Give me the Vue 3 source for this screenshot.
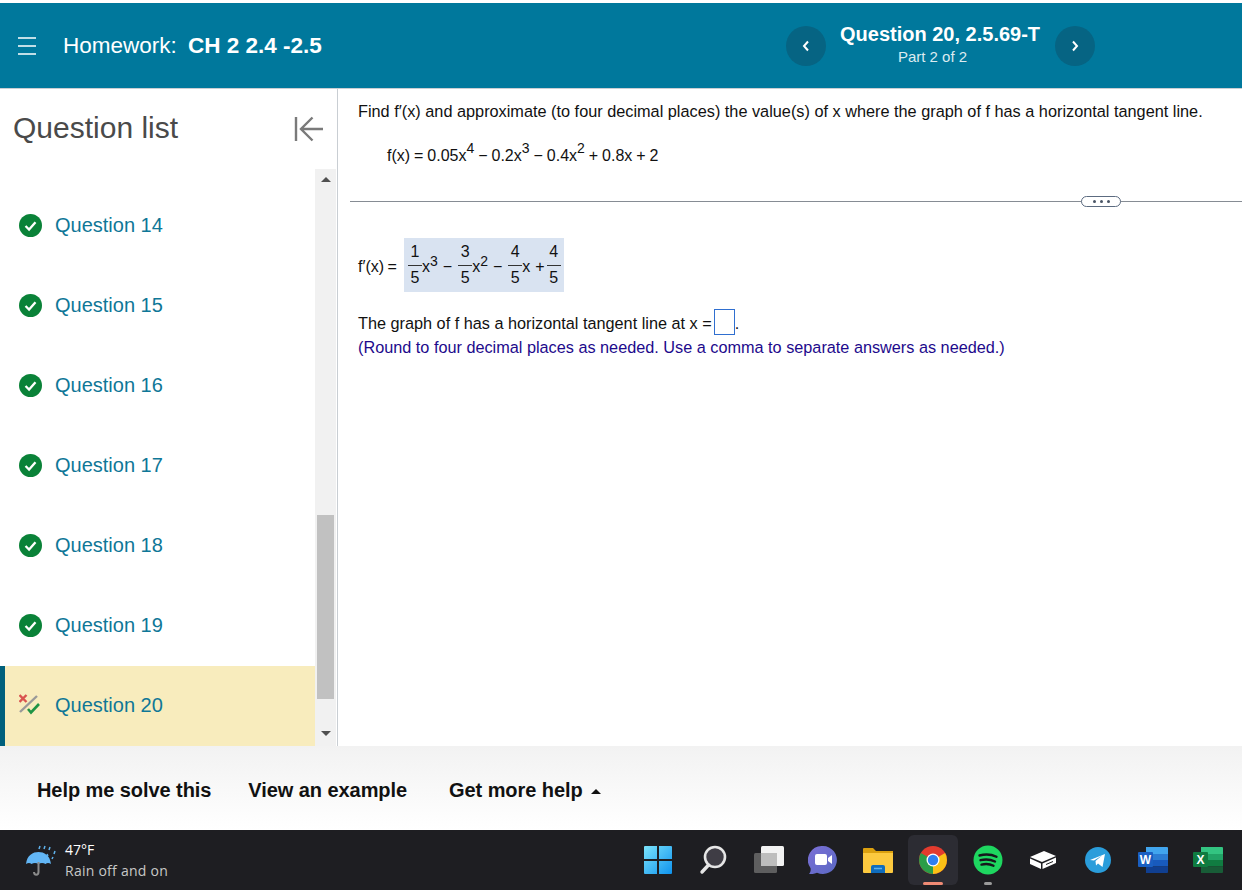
<script setup>
const questions = [14, 15, 16, 17, 18, 19]
const helpLinks = ["Help me solve this", "View an example"]
const fractions = [
  { num: 1, tail: "x", sup: 3, op: "−" },
  { num: 3, tail: "x", sup: 2, op: "−" },
  { num: 4, tail: "x", sup: null, op: "+" },
  { num: 4, tail: "", sup: null, op: "" },
]
</script>

<template>
  <div class="page">
    <header class="topbar">
      <svg class="menu-icon" width="20" height="18" viewBox="0 0 20 18">
        <path d="M1 1h18M1 9h18M1 17h18" stroke="#fff" stroke-width="1.700" fill="none" />
      </svg>
      <div class="hw-title">Homework: <b>CH 2 2.4 -2.5</b></div>
      <nav class="q-nav">
        <button class="nav-btn">
          <svg width="8" height="12" viewBox="0 0 8 12">
            <path d="M6 1.500 2 6l4 4.500" stroke="#fff" stroke-width="2" fill="none" />
          </svg>
        </button>
        <div class="q-label">
          <div class="q-name">Question 20, 2.5.69-T</div>
          <div class="q-part">Part 2 of 2</div>
        </div>
        <button class="nav-btn">
          <svg width="8" height="12" viewBox="0 0 8 12">
            <path d="M2 1.500 6 6l-4 4.500" stroke="#fff" stroke-width="2" fill="none" />
          </svg>
        </button>
      </nav>
    </header>

    <div class="middle">
      <aside class="sidebar">
        <div class="side-head">
          <h2>Question list</h2>
          <svg width="30" height="26" viewBox="0 0 30 26">
            <path d="M2 1v24M29 13H7M18.500 1.500 7 13l11.500 11.500" stroke="#7a7a7a" stroke-width="2.400" fill="none" />
          </svg>
        </div>
        <div class="side-body">
          <ul class="q-list">
            <li v-for="n in questions" :key="n" class="q-item">
              <svg class="status" width="23" height="23" viewBox="0 0 24 24">
                <circle cx="12" cy="12" r="12" fill="#0a8238" />
                <path d="M6.800 12.500 10.500 16.200 17.200 8.500" stroke="#fff" stroke-width="2.400" fill="none" />
              </svg>
              <span>Question {{ n }}</span>
            </li>
            <li class="q-item current">
              <svg class="status" width="24" height="24" viewBox="0 0 24 24">
                <path d="M1 19 18 3" stroke="#999" stroke-width="2.400" />
                <path d="M.5 2 7.500 9M7.500 2 .5 9" stroke="#d9534f" stroke-width="2.400" />
                <path d="M9 16 12 19.500 20 11" stroke="#1f9445" stroke-width="2.600" fill="none" />
              </svg>
              <span>Question 20</span>
            </li>
          </ul>
          <div class="scrollbar">
            <span class="arrow up"></span>
            <span class="thumb"></span>
            <span class="arrow down"></span>
          </div>
        </div>
      </aside>

      <main class="content">
        <div class="prompt">
          <p class="lead">Find f′(x) and approximate (to four decimal places) the value(s) of x where the graph of f has a horizontal tangent line.</p>
          <p class="given">f(x) = 0.05x<sup>4</sup> − 0.2x<sup>3</sup> − 0.4x<sup>2</sup> + 0.8x + 2</p>
        </div>
        <div class="divider">
          <span class="more"><i></i><i></i><i></i></span>
        </div>
        <div class="answer">
          <div class="deriv">
            <span class="deriv-label">f′(x) =</span>
            <span class="answer-box">
              <template v-for="(f, i) in fractions" :key="i">
                <span class="frac"><span class="top">{{ f.num }}</span><span class="bottom">5</span></span>
                <span v-if="f.tail" class="term">{{ f.tail }}<sup v-if="f.sup">{{ f.sup }}</sup></span>
                <span v-if="f.op" class="op" :class="{ plus: f.op === '+' }">{{ f.op }}</span>
              </template>
            </span>
          </div>
          <p class="line">The graph of f has a horizontal tangent line at x =<span class="blank"></span>.</p>
          <p class="hint">(Round to four decimal places as needed. Use a comma to separate answers as needed.)</p>
        </div>
      </main>
    </div>

    <footer class="help-bar">
      <a v-for="link in helpLinks" :key="link" class="help-link">{{ link }}</a>
      <a class="help-link more-help">Get more help<span class="caret"></span></a>
    </footer>

    <div class="taskbar">
      <div class="weather">
        <svg width="34" height="34" viewBox="0 0 34 34">
          <path d="M15 6l1-3M20 6l1-3M26 4l-1 3M31 8l-1 3M23 11l1 2M29 14l-1 2" stroke="#5fb2ec" stroke-width="1.500" />
          <path d="M2 21C3 12 9 9 14.500 9S26 12 27 21c-2-1.500-4-1.500-5.500 0-2-1.500-5-1.500-7 0-2-1.500-5-1.500-7 0C6 19.500 4 19.500 2 21Z" fill="#62b6f5" />
          <path d="M14.500 19v10c0 3.500-4.500 3.500-4.500 0" stroke="#8b8b8b" stroke-width="2" fill="none" />
        </svg>
        <div class="weather-text">
          <div class="temp">47°F</div>
          <div class="cond">Rain off and on</div>
        </div>
      </div>
      <div class="tray">
        <div class="slot">
          <svg width="30" height="30" viewBox="0 0 30 30">
            <defs>
              <linearGradient id="win" x1="0" y1="0" x2="1" y2="1">
                <stop offset="0" stop-color="#7be3fb" />
                <stop offset="1" stop-color="#0f93ee" />
              </linearGradient>
            </defs>
            <path d="M1 2a1 1 0 0 1 1-1h12v13H1ZM16 1h12a1 1 0 0 1 1 1v12H16ZM1 16h13v13H2a1 1 0 0 1-1-1ZM16 16h13v12a1 1 0 0 1-1 1H16Z" fill="url(#win)" />
          </svg>
        </div>
        <div class="slot">
          <svg width="28" height="30" viewBox="0 0 28 30">
            <circle cx="16" cy="12" r="10" fill="#3f3d45" stroke="#e6e6e6" stroke-width="2.600" />
            <path d="M9.500 20 3 27" stroke="#e6e6e6" stroke-width="3.400" stroke-linecap="round" />
          </svg>
        </div>
        <div class="slot">
          <svg width="32" height="30" viewBox="0 0 32 30">
            <rect x="9" y="1" width="23" height="20" rx="1.500" fill="#f2f2f2" />
            <rect x="2" y="8" width="23" height="20" rx="1.500" fill="#6a6a6a" fill-opacity="0.850" />
            <rect x="9" y="8" width="16" height="13" fill="#bdbdbd" />
          </svg>
        </div>
        <div class="slot">
          <svg width="30" height="30" viewBox="0 0 30 30">
            <defs>
              <linearGradient id="teams" x1="0" y1="0" x2="1" y2="1">
                <stop offset="0" stop-color="#7b6fd6" />
                <stop offset="1" stop-color="#5b69c4" />
              </linearGradient>
            </defs>
            <path d="M15 1a14 14 0 1 1-6 26.700C6 29 3 29 1 29c1.500-1.500 2-4 1.500-6A14 14 0 0 1 15 1Z" fill="url(#teams)" />
            <rect x="7" y="9" width="12" height="11" rx="2" fill="#fff" />
            <path d="M20 13l4-3v9l-4-3Z" fill="#fff" />
          </svg>
        </div>
        <div class="slot">
          <svg width="32" height="30" viewBox="0 0 32 30">
            <path d="M1 4a1 1 0 0 1 1-1h9l3 3h17v6H1Z" fill="#dba00f" />
            <path d="M1 8h30v19a1 1 0 0 1-1 1H2a1 1 0 0 1-1-1Z" fill="#fcc93f" />
            <path d="M9 22a2 2 0 0 1 2-2h10a2 2 0 0 1 2 2v6H9Z" fill="#0f6cbd" />
            <path d="M12 23.500h8" stroke="#5fb2ec" stroke-width="1.500" />
          </svg>
        </div>
        <div class="slot chrome-slot">
          <svg width="28" height="28" viewBox="0 0 28 28">
            <circle cx="14" cy="14" r="14" fill="#e33b2e" />
            <path d="M14 14 26.100 7A14 14 0 0 1 14 28Z" fill="#fbc116" />
            <path d="M14 14 14 28A14 14 0 0 1 1.900 7Z" fill="#2a9d47" />
            <circle cx="14" cy="14" r="6.500" fill="#fff" />
            <circle cx="14" cy="14" r="5.200" fill="#2f7ff0" />
          </svg>
          <span class="open-bar salmon"></span>
        </div>
        <div class="slot">
          <svg width="30" height="30" viewBox="0 0 30 30">
            <circle cx="15" cy="15" r="14.500" fill="#1ed760" />
            <path d="M6.500 10.500c6-1.700 12-1.200 17 1.300M7.500 15.200c5-1.300 10-.9 14.500 1.300M8.500 19.600c4-1 8.500-.7 12 1.200" stroke="#16181c" stroke-width="2.400" stroke-linecap="round" fill="none" />
          </svg>
          <span class="open-bar grey"></span>
        </div>
        <div class="slot">
          <svg width="28" height="20" viewBox="0 0 28 20">
            <path d="M1 7 15 1l12 5-14 6Z" fill="#fff" />
            <path d="M1 8.500 12 13.500v5.500L1 14ZM13.500 13.500 27 7.500V13L13.500 19Z" fill="#fff" />
            <path d="M17 14.500 24 11.500" stroke="#16181c" stroke-width="1" />
          </svg>
        </div>
        <div class="slot">
          <svg width="26" height="26" viewBox="0 0 26 26">
            <circle cx="13" cy="13" r="13" fill="#2a9ddb" />
            <path d="M5 13 20 7l-2.500 13-4.500-3.500-2 2-.5-4.500 6.500-5.500-8 5Z" fill="#fff" />
          </svg>
        </div>
        <div class="slot">
          <svg width="30" height="26" viewBox="0 0 30 26">
            <path d="M8 0h21a1 1 0 0 1 1 1v6H8Z" fill="#41a5ee" />
            <rect x="8" y="7" width="22" height="6" fill="#2b7cd3" />
            <rect x="8" y="13" width="22" height="6.500" fill="#185abd" />
            <path d="M8 19.500h22V25a1 1 0 0 1-1 1H8Z" fill="#103f91" />
            <rect x="0" y="5" width="15" height="15" rx="1" fill="#1a5fc2" />
            <text x="7.500" y="16.500" class="badge-letter">W</text>
          </svg>
        </div>
        <div class="slot">
          <svg width="30" height="26" viewBox="0 0 30 26">
            <path d="M8 0h21a1 1 0 0 1 1 1v6H8Z" fill="#33c481" />
            <rect x="8" y="7" width="22" height="6" fill="#21a366" />
            <rect x="8" y="13" width="22" height="6.500" fill="#107c41" />
            <path d="M8 19.500h22V25a1 1 0 0 1-1 1H8Z" fill="#185c37" />
            <rect x="0" y="5" width="15" height="15" rx="1" fill="#0f7b40" />
            <text x="7.500" y="16.500" class="badge-letter">X</text>
          </svg>
        </div>
      </div>
    </div>
  </div>
</template>

<style scoped>
.page {
  display: flex;
  flex-direction: column;
  height: 890px;
  padding-top: 3px;
  box-sizing: border-box;
  overflow: hidden;
  background: #fff;
  font-family: "Liberation Sans", Arial, sans-serif;
  color: #111;
}

.topbar {
  display: flex;
  align-items: center;
  height: 86px;
  flex-shrink: 0;
  padding: 0 147px 0 17px;
  box-sizing: border-box;
  background: #00789c;
  border-bottom: 1px solid #c9ced3;
  color: #fff;
}

.hw-title {
  margin-left: 26px;
  margin-top: 1px;
  font-size: 22.500px;
  white-space: pre;
}

.hw-title b {
  margin-left: 5px;
}

.q-nav {
  display: flex;
  align-items: center;
  margin-left: auto;
  margin-top: 1px;
}

.nav-btn {
  display: flex;
  align-items: center;
  justify-content: center;
  width: 40px;
  height: 40px;
  padding: 0;
  border: 0;
  border-radius: 50%;
  background: #066483;
}

.q-label {
  width: 200px;
  margin: -5px 15px 0 14px;
  text-align: center;
}

.q-name {
  font-size: 20px;
  font-weight: 700;
  line-height: 26px;
  white-space: nowrap;
}

.q-part {
  margin-right: 15px;
  font-size: 15px;
  line-height: 19px;
  color: #dcebf0;
}

.middle {
  display: flex;
  flex: 1;
  min-height: 0;
}

.sidebar {
  display: flex;
  flex-direction: column;
  width: 338px;
  flex-shrink: 0;
  box-sizing: border-box;
  border-right: 1px solid #c9ced3;
}

.side-head {
  display: flex;
  align-items: center;
  justify-content: space-between;
  height: 80px;
  padding: 0 13px;
  box-sizing: border-box;
  flex-shrink: 0;
}

.side-head h2 {
  margin: -2px 0 0;
  font-size: 30px;
  font-weight: 400;
  color: #4a4a4a;
}

.side-body {
  display: flex;
  flex: 1;
  min-height: 0;
}

.q-list {
  flex: 1;
  margin: 0;
  padding: 16px 0 0;
  list-style: none;
}

.q-item {
  display: flex;
  align-items: center;
  height: 80px;
  padding-left: 19px;
  font-size: 20px;
  color: #0f7797;
}

.q-item .status {
  margin-right: 13px;
}

.q-item.current {
  box-sizing: border-box;
  margin-top: 1px;
  padding-left: 14px;
  padding-bottom: 2px;
  border-left: 5px solid #00607c;
  background: #f8ecbd;
}

.q-item.current .status {
  margin-right: 12px;
}

.scrollbar {
  display: flex;
  flex-direction: column;
  align-items: center;
  width: 21px;
  margin-right: 1px;
  background: #f1f1f1;
}

.arrow {
  width: 0;
  height: 0;
  border-left: 5px solid transparent;
  border-right: 5px solid transparent;
}

.arrow.up {
  margin-top: 8px;
  border-bottom: 5px solid #505050;
}

.arrow.down {
  margin-top: 32px;
  border-top: 5px solid #505050;
}

.thumb {
  width: 17px;
  height: 184px;
  margin-top: 333px;
  background: #c1c1c1;
}

.content {
  flex: 1;
  min-width: 0;
  padding-left: 12px;
  font-size: 16.250px;
}

.content p {
  margin: 0;
}

.prompt {
  padding: 13px 0 0 8px;
  height: 112px;
  box-sizing: border-box;
}

.lead {
  font-size: 16.300px;
  line-height: 18px;
  white-space: nowrap;
}

.given {
  margin-top: 25px !important;
  padding-left: 29px;
  font-size: 16px;
  line-height: 22px;
  word-spacing: -0.500px;
  white-space: pre;
}

sup {
  font-size: 14px;
  line-height: 0;
  vertical-align: 8px;
}

.divider {
  position: relative;
  height: 1px;
  background: #868c94;
}

.more {
  position: absolute;
  left: 731px;
  top: -5px;
  display: flex;
  align-items: center;
  justify-content: center;
  gap: 4px;
  width: 40px;
  height: 11px;
  box-sizing: border-box;
  border: 1px solid #5c6b80;
  border-radius: 6px;
  background: #fff;
}

.more i {
  width: 3px;
  height: 3px;
  border-radius: 50%;
  background: #4a5566;
}

.answer {
  padding: 36px 0 0 8px;
}

.deriv {
  display: flex;
  align-items: center;
  height: 54px;
  font-size: 16px;
}

.deriv-label {
  width: 46px;
  margin-top: 3px;
  flex-shrink: 0;
  word-spacing: -1px;
}

.answer-box {
  display: flex;
  align-items: center;
  width: 160px;
  height: 54px;
  padding: 0 0 0 4px;
  box-sizing: border-box;
  background: #d9e3f1;
}

.frac {
  display: inline-flex;
  flex-direction: column;
  align-items: center;
  width: 14px;
  line-height: 18px;
}

.frac .top {
  width: 100%;
  padding-bottom: 4px;
  border-bottom: 1px solid #333;
  text-align: center;
}

.frac .bottom {
  margin-top: 3px;
}

.term {
  margin-top: 3px;
  line-height: 16px;
}

.term sup {
  vertical-align: 6px;
}

.op {
  margin: 3px 6px 0 5px;
}

.op.plus {
  margin-right: 2px;
}

.line {
  display: flex;
  align-items: flex-start;
  margin-top: 17px !important;
  height: 26px;
  line-height: 28px;
  white-space: pre;
}

.blank {
  display: inline-block;
  width: 21px;
  height: 26px;
  margin-left: 2px;
  box-sizing: border-box;
  border: 1.500px solid #2f6fd0;
  background: #fff;
}

.hint {
  margin-top: 2px !important;
  line-height: 20px;
  color: #1d0a8c;
}

.help-bar {
  display: flex;
  align-items: center;
  height: 84px;
  flex-shrink: 0;
  padding: 5px 0 0 37px;
  box-sizing: border-box;
  background: linear-gradient(#f2f2f2, #fff);
}

.help-link {
  margin-right: 37px;
  font-size: 20px;
  font-weight: 700;
  letter-spacing: -0.070px;
  color: #111;
}

.help-link.more-help {
  margin-left: 5px;
}

.caret {
  display: inline-block;
  margin-left: 8px;
  vertical-align: 3px;
  border-left: 5px solid transparent;
  border-right: 5px solid transparent;
  border-bottom: 5px solid #111;
}

.taskbar {
  display: flex;
  align-items: center;
  height: 60px;
  flex-shrink: 0;
  padding: 0 7px 0 24px;
  box-sizing: border-box;
  background: #1e1e22;
}

.weather {
  display: flex;
  align-items: center;
  gap: 7px;
}

.weather-text {
  font-family: "Open Sans", sans-serif;
  font-size: 14px;
  line-height: 21px;
  color: #fff;
}

.cond {
  color: #c8c8c8;
  letter-spacing: 0.250px;
}

.tray {
  display: flex;
  align-items: center;
  margin-left: auto;
}

.slot {
  position: relative;
  display: flex;
  align-items: center;
  justify-content: center;
  width: 55px;
  height: 50px;
}

.chrome-slot::before {
  content: "";
  position: absolute;
  inset: 0 2px 0 3px;
  border-radius: 6px;
  background: #2c2c33;
}

.chrome-slot svg {
  position: relative;
}

.open-bar {
  position: absolute;
  bottom: 0;
  left: 50%;
  height: 3px;
  border-radius: 2px;
  transform: translateX(-50%);
}

.open-bar.salmon {
  width: 20px;
  background: #ef8a74;
}

.open-bar.grey {
  width: 8px;
  background: #9a9a9a;
}

.badge-letter {
  fill: #fff;
  font-family: "Liberation Sans", sans-serif;
  font-size: 12px;
  font-weight: 700;
  text-anchor: middle;
}
</style>
